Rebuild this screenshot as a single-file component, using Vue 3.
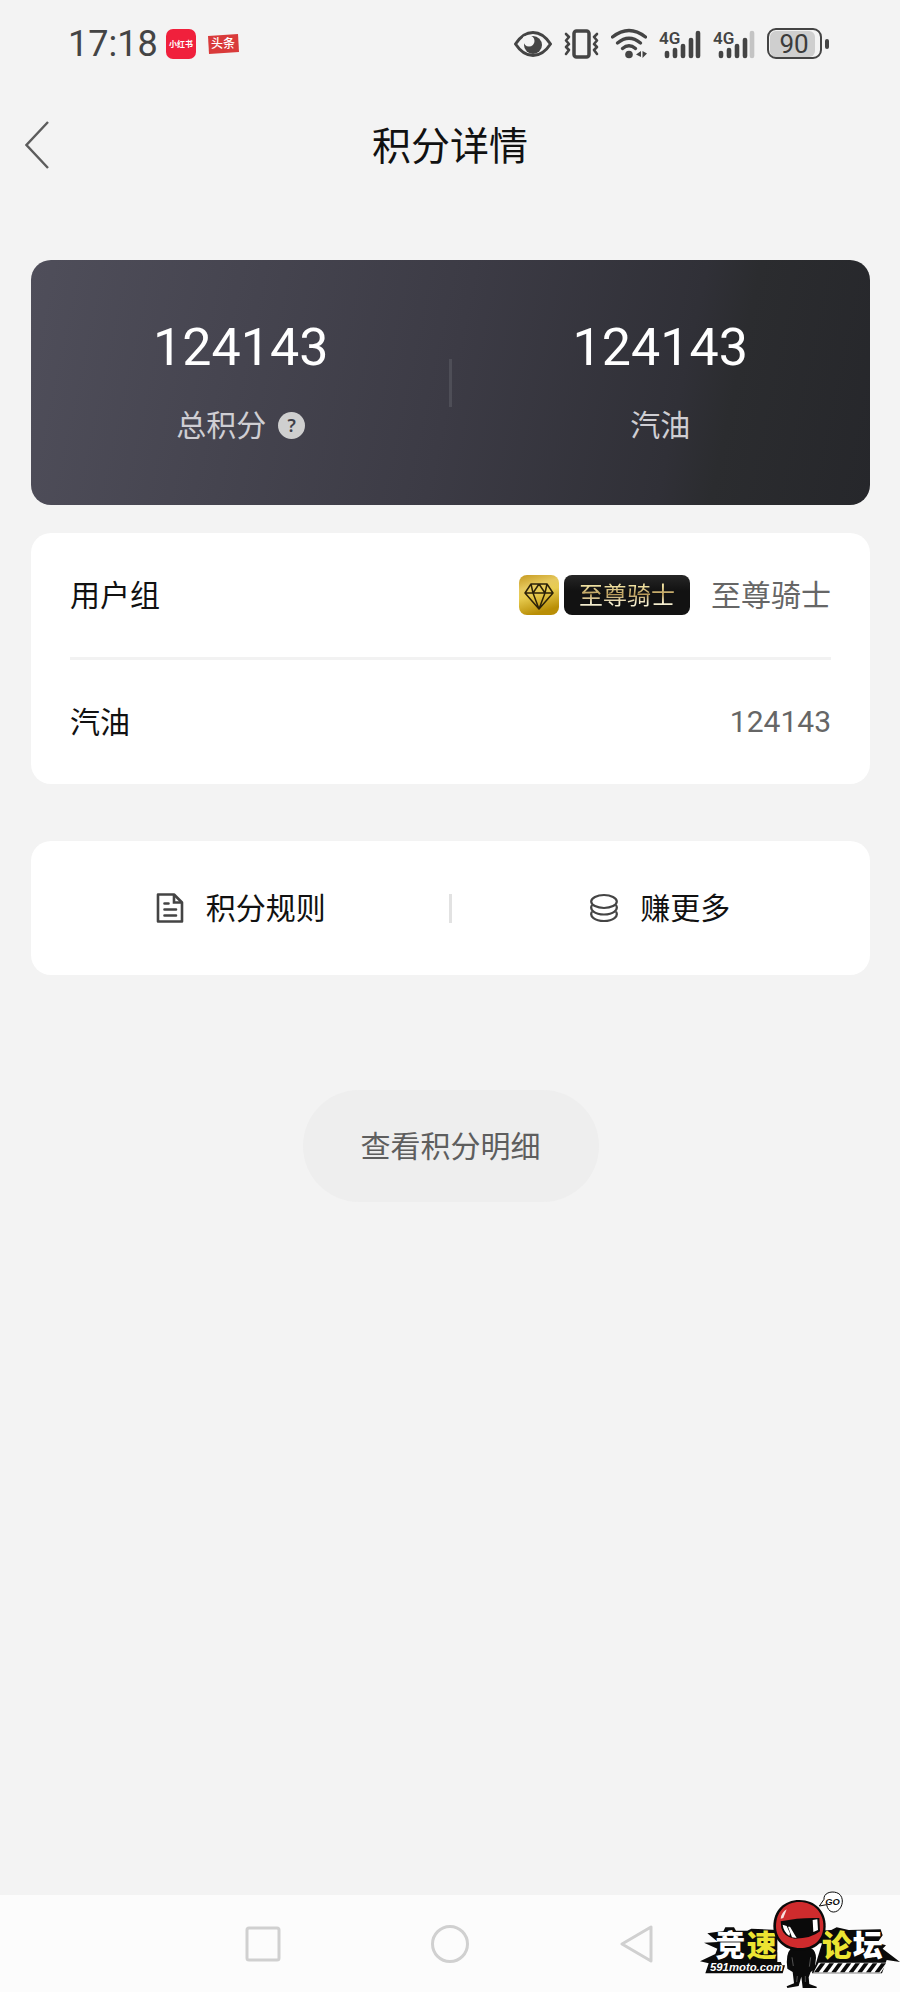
<script setup>
import { ref } from 'vue'

const userGroup = ref('至尊骑士')
const fuel = ref(124143)

const summary = [
  { label: '总积分', value: 124143, help: true },
  { label: '汽油', value: 124143, help: false },
]

const signals = [
  { id: 'sim1', level: 5 },
  { id: 'sim2', level: 4 },
]

const bars = [
  { x: 8, y: 25 },
  { x: 16, y: 22 },
  { x: 24, y: 18 },
  { x: 32, y: 12 },
  { x: 39, y: 5 },
]

const hatches = [392, 418, 444, 470, 496, 522, 548, 574]
</script>

<template>
  <div class="page">
    <div class="status-bar">
      <div class="status-left">
        <span class="time">17:18</span>
        <svg class="app-icon" width="30" height="32" viewBox="0 0 30 32">
          <rect y="1" width="30" height="30" rx="7" fill="#f0203c" />
          <text x="15" y="19" text-anchor="middle" font-size="8" font-weight="700" fill="#fff">小红书</text>
        </svg>
        <svg class="app-icon" width="35" height="32" viewBox="-4 0 35 32">
          <path d="M0 8 L30 6 L31 24 L1 26 Z" fill="#d93a3a" />
          <text x="15" y="20" text-anchor="middle" font-size="12" font-weight="500" fill="#fff">头条</text>
        </svg>
      </div>

      <div class="status-right">
        <svg width="38" height="32" viewBox="0 0 38 32" fill="none">
          <path d="M1.500 16 Q9 4.500 19 4.500 T36.500 16 Q29 27.500 19 27.500 T1.500 16 Z" stroke="#444" stroke-width="3" stroke-linejoin="round" />
          <circle cx="19" cy="17" r="9" fill="#444" />
          <circle cx="15" cy="13" r="5.500" fill="#f3f3f3" />
          <path d="M9 9 Q12 7 18 7 L16 10 Q11 12 9 16 Z" fill="#f3f3f3" />
        </svg>
        <svg width="35" height="32" viewBox="0 0 35 32" fill="none" stroke="#444">
          <rect x="10" y="3" width="15" height="26" rx="2.500" stroke-width="3.500" />
          <path d="M2 6 L5 9 L2 12.500 L5 16 L2 19 L5 22 L2 26" stroke-width="2.600" stroke-linejoin="round" stroke-linecap="round" />
          <path d="M33 6 L30 9 L33 12.500 L30 16 L33 19 L30 22 L33 26" stroke-width="2.600" stroke-linejoin="round" stroke-linecap="round" />
        </svg>
        <svg width="36" height="32" viewBox="0 0 36 32" fill="none" stroke="#444" stroke-linecap="round">
          <path d="M1.500 9 Q18 -4 34.500 9" stroke-width="3.400" />
          <path d="M6.500 15 Q18 5.500 29.500 15" stroke-width="3.400" />
          <path d="M11.500 20.500 Q18 15 24.500 20.500" stroke-width="3.400" />
          <circle cx="18" cy="26.500" r="3.800" fill="#444" stroke="none" />
          <path d="M30 23 V29 L25 26.500 Z M31.500 23 V30 L36 25.500 Z" fill="#444" stroke="none" />
        </svg>
        <svg v-for="sim in signals" :key="sim.id" width="42" height="32" viewBox="0 0 42 32">
          <line
            v-for="(bar, i) in bars"
            :key="bar.x"
            :x1="bar.x"
            :y1="bar.y"
            :x2="bar.x"
            y2="28"
            :stroke="i < sim.level ? '#444' : '#c4c4c4'"
            stroke-width="4.600"
            stroke-linecap="round"
          />
          <text class="digits" x="0" y="16" font-size="17" font-weight="600" fill="#444">4G</text>
        </svg>
        <svg width="62" height="32" viewBox="0 0 62 32">
          <rect x="3" y="3" width="45" height="26" rx="6" fill="#cfcfcf" />
          <rect x="1" y="1" width="53" height="29" rx="8" fill="none" stroke="#444" stroke-width="2" />
          <path d="M60 13 V19" stroke="#444" stroke-width="4" stroke-linecap="round" />
          <text class="digits" x="27" y="25" text-anchor="middle" font-size="26" fill="#3c3c3c">90</text>
        </svg>
      </div>
    </div>

    <header class="header">
      <button class="back" type="button" aria-label="返回">
        <svg width="24" height="48" viewBox="0 0 24 48" fill="none">
          <path d="M23 1 L1.500 24 L23 47" stroke="#5c5c5c" stroke-width="2.400" />
        </svg>
      </button>
      <h1 class="title">积分详情</h1>
    </header>

    <main class="content">
      <section class="summary">
        <div v-for="item in summary" :key="item.label" class="summary-item">
          <span class="summary-value digits">{{ item.value }}</span>
          <span class="summary-label">
            {{ item.label }}
            <button v-if="item.help" class="help" type="button">?</button>
          </span>
        </div>
      </section>

      <section class="card info">
        <div class="row">
          <span class="row-label">用户组</span>
          <div class="row-value">
            <svg class="gem" width="40" height="40" viewBox="0 0 40 40">
              <defs>
                <linearGradient id="gold" x1="0" y1="0" x2="0.300" y2="1">
                  <stop offset="0" stop-color="#c69a20" />
                  <stop offset="0.350" stop-color="#e6c95e" />
                  <stop offset="0.550" stop-color="#e8cc50" />
                  <stop offset="1" stop-color="#b98e06" />
                </linearGradient>
              </defs>
              <rect width="40" height="40" rx="8" fill="url(#gold)" />
              <path
                d="M12 9 H28 L34 18 L20 34 L6 18 Z M6 18 H34 M12 9 L14 18 L20 34 L26 18 L28 9 M14 18 L20 9 L26 18"
                fill="none"
                stroke="#2b2108"
                stroke-width="1.500"
                stroke-linejoin="round"
              />
            </svg>
            <span class="badge"><span class="badge-text">{{ userGroup }}</span></span>
            <span>{{ userGroup }}</span>
          </div>
        </div>
        <div class="row">
          <span class="row-label">汽油</span>
          <div class="row-value digits">{{ fuel }}</div>
        </div>
      </section>

      <nav class="card actions">
        <a class="action" href="#">
          <svg width="28" height="30" viewBox="0 0 28 30" fill="none" stroke="#444" stroke-width="2.600">
            <path d="M2 1.500 H18 L26 9.500 V28.500 H2 Z" stroke-linejoin="round" />
            <path d="M18 1.500 V9.500 H26" />
            <path d="M8.500 10.500 H12.500 M8.500 16.500 H20 M8.500 22.500 H20" stroke-linecap="round" />
          </svg>
          积分规则
        </a>
        <a class="action" href="#">
          <svg width="28" height="30" viewBox="0 0 28 30" fill="none" stroke="#444" stroke-width="2.200">
            <ellipse cx="14" cy="8.500" rx="12.800" ry="6.500" />
            <path d="M2 12 C-1 17 5 21.500 14 21.500 S29 17 26 12" />
            <path d="M2 18.500 C-1 23.500 5 28 14 28 S29 23.500 26 18.500" />
          </svg>
          赚更多
        </a>
      </nav>

      <button class="detail" type="button">查看积分明细</button>
    </main>

    <footer class="nav-bar">
      <button class="nav-button" type="button" aria-label="最近任务">
        <svg width="38" height="38" viewBox="0 0 38 38">
          <rect x="3" y="3" width="32" height="32" rx="2" />
        </svg>
      </button>
      <button class="nav-button" type="button" aria-label="主页">
        <svg width="38" height="38" viewBox="0 0 38 38">
          <circle cx="19" cy="19" r="17.500" />
        </svg>
      </button>
      <button class="nav-button" type="button" aria-label="后退">
        <svg width="38" height="38" viewBox="0 0 38 38">
          <path d="M33 2 V36 L4 19 Z" />
        </svg>
      </button>

      <svg class="forum-logo" width="210" height="112" viewBox="0 0 630 336">
        <!-- spiky backing plate -->
        <path
          d="M78 156 L100 154 L106 142 H132 L138 152 H172 L184 146 L262 150 V246 H288 L278 280 H46 L56 250 L30 244 L76 222 L82 206 L42 188 L84 186 L52 160 Z"
          fill="#0a0a0a"
        />
        <path
          d="M384 152 L424 150 L440 142 L476 150 L572 148 L578 166 L562 188 L588 196 L578 206 L630 246 L590 240 L576 280 H366 Z"
          fill="#0a0a0a"
        />
        <path d="M262 212 L300 190 L396 190 L376 256 H276 Z" fill="#fff" />
        <text class="logo-cn" x="76" y="228" font-size="90" fill="#fff">竞</text>
        <text class="logo-cn" x="170" y="228" font-size="90" fill="#ece432">速</text>
        <text class="logo-cn" x="396" y="228" font-size="90" fill="#ece432">论</text>
        <text class="logo-cn" x="488" y="228" font-size="90" fill="#fff">坛</text>
        <text class="logo-latin" x="60" y="274" font-size="34" fill="#fff">591moto.com</text>
        <path d="M386 248 H592 L572 278 H370 Z" fill="#fff" />
        <path
          v-for="x in hatches"
          :key="x"
          :d="`M${x} 250 h14 l-20 27 h-14 Z`"
          fill="#0a0a0a"
        />
        <!-- rider -->
        <path
          d="M302 206 H366 Q378 214 378 234 L374 268 L362 276 L356 292 L358 312 L380 320 V324 H338 L334 290 L326 318 L292 324 L290 319 L312 310 L308 276 L292 266 Q286 222 302 206 Z"
          fill="#0a0a0a"
        />
        <path d="M306 232 L310 258 M362 232 L358 260 M322 288 L320 306 M346 288 L346 306" stroke="#777" stroke-width="2" />
        <path d="M328 60 C376 60 408 94 407 140 C406 186 374 212 330 212 C284 212 250 182 250 138 C250 92 282 60 328 60 Z" fill="#0a0a0a" />
        <path d="M328 66 C372 66 401 98 400 140 C399 180 370 204 330 204 C288 204 258 178 258 138 C258 96 286 66 328 66 Z" fill="#cf2b2d" />
        <path d="M272 124 Q328 112 388 114 L390 154 Q364 176 314 176 Q282 172 274 144 Z" fill="#0a0a0a" />
        <path d="M368 120 L382 118 L384 150 L370 156 Z M278 134 L290 138 L300 160 L298 168 Q280 154 278 134 Z M294 140 L300 140 L320 174 L306 172 Z" fill="#fff" />
        <path d="M272 116 Q274 98 290 88 L280 114 Z" fill="#fff" opacity="0.85" />
        <!-- speech bubble -->
        <path d="M388 78 L402 58 C400 40 422 32 440 38 C460 44 462 72 448 88 C434 102 414 98 410 74 Z" fill="#fff" stroke="#0a0a0a" stroke-width="3" />
        <text class="logo-latin" x="406" y="74" font-size="28" fill="#0a0a0a">GO</text>
      </svg>
    </footer>
  </div>
</template>

<style>
body {
  margin: 0;
  background: #f3f3f3;
}
</style>

<style scoped>
.page {
  display: flex;
  flex-direction: column;
  min-height: 100vh;
  background: #f3f3f3;
  color: #111;
  font-family: "Noto Sans", "Noto Sans CJK SC", sans-serif;
  font-size: 30px;
  line-height: 40px;
}

button {
  padding: 0;
  border: 0;
  background: none;
  color: inherit;
  font: inherit;
  cursor: pointer;
}

svg {
  display: block;
  flex: none;
}

.digits {
  font-family: Roboto, sans-serif;
}

.status-bar {
  display: flex;
  align-items: center;
  justify-content: space-between;
  height: 88px;
  padding: 0 71px 0 68px;
}

.status-left,
.status-right {
  display: flex;
  align-items: center;
  gap: 12px;
}

.status-left {
  gap: 8px;
}

.time {
  color: #444;
  font-family: Roboto, sans-serif;
  font-size: 36px;
}

.app-icon {
  font-family: "Noto Sans CJK SC", sans-serif;
}

.header {
  display: grid;
  grid-template-columns: 100px 1fr 100px;
  align-items: center;
  height: 113px;
}

.back {
  display: flex;
  padding-left: 25px;
}

.title {
  margin: 0;
  text-align: center;
  font-size: 39px;
  font-weight: 400;
}

.content {
  display: flex;
  flex-direction: column;
  padding: 59px 30px 60px 31px;
}

.summary {
  position: relative;
  display: grid;
  grid-template-columns: 1fr 1fr;
  padding: 58px 0 60px;
  border-radius: 20px;
  background: linear-gradient(102deg, #4f4e5a 0%, #3c3b45 50%, #303037 76%, #2b2c2f 82%, #26272b 100%);
}

.summary::after,
.actions::after {
  position: absolute;
  inset: 0;
  width: 3px;
  height: 48px;
  margin: auto;
  background: #4e4e57;
  content: "";
}

.summary-item {
  display: flex;
  flex-direction: column;
  align-items: center;
  gap: 27px;
}

.summary-value {
  color: #fff;
  font-size: 52px;
  line-height: 60px;
}

.summary-label {
  display: flex;
  align-items: center;
  gap: 12px;
  color: #cfced3;
}

.help {
  width: 27px;
  height: 27px;
  border-radius: 50%;
  background: #cfcfcf;
  color: #3f3f48;
  font-size: 18px;
  font-weight: 600;
  line-height: 27px;
}

.card {
  border-radius: 20px;
  background: #fff;
}

.info {
  margin-top: 28px;
  padding: 0 39px;
}

.row {
  display: flex;
  align-items: center;
  justify-content: space-between;
  height: 124px;
}

.row + .row {
  border-top: 3px solid #f2f2f2;
}

.row-value {
  display: flex;
  align-items: center;
  color: #666;
}

.badge {
  margin: 0 21px 0 5px;
  padding: 0 15px;
  border-radius: 8px;
  background: linear-gradient(#262626, #121212 40%);
  font-size: 24px;
}

.badge-text {
  background: linear-gradient(#efe0a0 25%, #b99a58 50%, #f6efd0 75%);
  background-clip: text;
  color: transparent;
}

.actions {
  position: relative;
  display: grid;
  grid-template-columns: 1fr 1fr;
  margin-top: 57px;
}

.actions::after {
  height: 29px;
  background: #e2e2e2;
}

.action {
  display: flex;
  align-items: center;
  justify-content: center;
  gap: 22px;
  height: 134px;
  color: #111;
  text-decoration: none;
}

.detail {
  align-self: center;
  margin-top: 115px;
  padding: 36px 58px;
  border-radius: 56px;
  background: #eee;
  color: #5e5e5e;
}

.nav-bar {
  position: relative;
  display: flex;
  align-items: center;
  justify-content: center;
  gap: 149px;
  height: 97px;
  margin-top: auto;
  background: #fcfcfc;
}

.nav-button svg {
  fill: none;
  stroke: #d0d0d0;
  stroke-width: 3px;
  stroke-linejoin: round;
}

.forum-logo {
  position: absolute;
  right: 0;
  bottom: 0;
}

.logo-cn {
  font-family: "Liberation Sans", "Noto Sans CJK SC", sans-serif;
  font-weight: 900;
}

.logo-latin {
  font-family: "Liberation Sans", sans-serif;
  font-style: italic;
  font-weight: 700;
}
</style>
